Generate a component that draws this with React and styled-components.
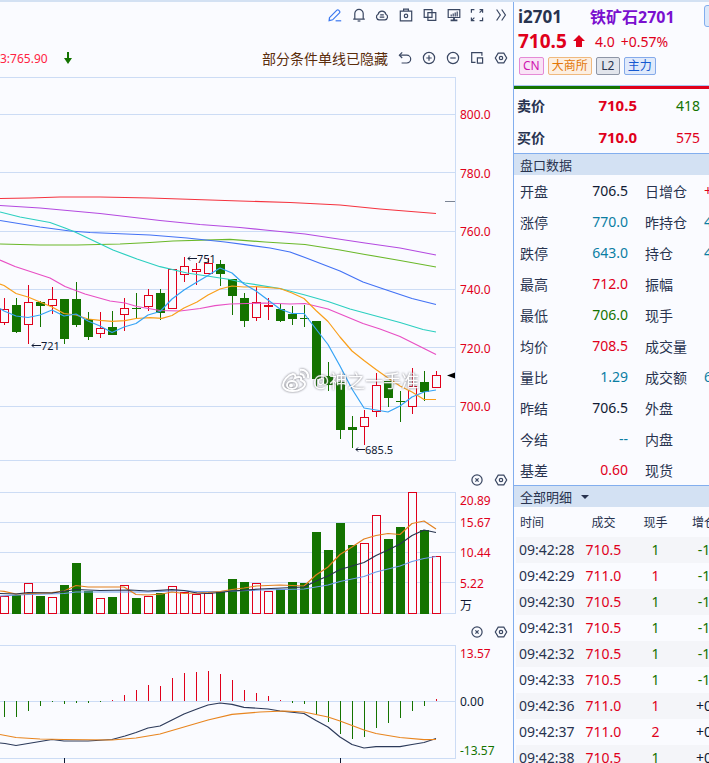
import styled, { createGlobalStyle, css } from 'styled-components';

const colors = {
    page: '#fafbff',
    band: '#d3e1f3',
    line: '#ccdcf5',
    edge: '#82aeee',
    ink: '#28334f',
    black: '#101a33',
    up: '#e0001b',
    down: '#147300',
    teal: '#0b7ea3',
};

const GlobalStyle = createGlobalStyle`
    * {
        box-sizing: border-box;
    }
    body {
        margin: 0;
        background-color: ${colors.page};
        color: ${colors.ink};
        font-family: 'Noto Sans', 'Noto Sans CJK SC', sans-serif;
        font-size: 14px;
    }
    button,
    select {
        font: inherit;
        color: inherit;
        padding: 0;
        border: none;
        background: none;
        cursor: pointer;
    }
`;

const Container = styled.div`
    display: flex;
    height: 100vh;
    overflow: hidden;
    border-top: 2px solid ${colors.band};
`;
const ChartPane = styled.main`
    flex: 1;
    min-width: 0;
    display: flex;
    flex-direction: column;
    overflow: hidden;
`;
const Toolbar = styled.div`
    height: 26px;
    display: flex;
    justify-content: flex-end;
    padding-right: 5px;
`;
const ToolGroup = styled.div`
    width: 180px;
    display: flex;
    align-items: center;
    justify-content: space-between;
`;
const StatusRow = styled.div`
    height: 36px;
    margin-top: 12px;
    padding-right: 5px;
    display: flex;
    align-items: center;
    gap: 10px;
`;
const MaValue = styled.span`
    font-size: 12px;
    color: #ff2343;
`;
const Notice = styled.span`
    margin-left: auto;
    color: #5a2d0c;
    white-space: nowrap;
`;
const IconButton = styled.button`
    display: flex;
    flex: none;
    color: ${(props) => (props.$active ? '#3b78f0' : '#3a4762')};
`;
const Glyph = styled.svg`
    display: block;
    flex: none;
`;
const PanelHeader = styled.div`
    height: 24px;
    padding-right: 5px;
    display: flex;
    flex: none;
    align-items: center;
    justify-content: flex-end;
    gap: 10px;
`;
const ChartRow = styled.div`
    display: flex;
    flex: none;
    justify-content: flex-end;
`;
// the plots stay glued to the price axis, grid lines run on to the left
const Plot = styled.svg`
    display: block;
    flex: none;
    overflow: visible;
`;
const AxisText = styled.text`
    font-size: 12px;
    fill: ${(props) => props.$color || colors.up};
`;
const MarkText = styled.text`
    font-size: 11px;
    fill: ${colors.black};
`;
const WatermarkGroup = styled.g`
    opacity: 0.9;
    filter: drop-shadow(0 0 1px rgba(80, 80, 90, 0.9));
`;
const Watermark = styled.text`
    font-size: 18px;
    fill: #ffffff;
`;

const QuotePane = styled.aside`
    flex: none;
    width: 196px;
    overflow: hidden;
    border-left: 1px solid ${colors.edge};
`;
const QuoteInner = styled.div`
    width: 252px;
`;
const QuoteHead = styled.header`
    height: 84px;
    padding: 2px 0 0 4px;
    border-bottom: 1px solid #a9c6f2;
`;
const NameRow = styled.div`
    height: 24px;
    display: flex;
    align-items: center;
    font-size: 16px;
    font-weight: 700;
`;
const Code = styled.span`
    width: 72px;
    font-size: 17px;
`;
const Name = styled.span`
    width: 114px;
    color: #7a10cf;
`;
const NameButton = styled.button`
    width: 48px;
    height: 22px;
    border: 1px solid ${colors.edge};
    border-radius: 3px;
    background-color: #dce8fa;
`;
const PriceRow = styled.div`
    height: 26px;
    display: flex;
    align-items: center;
    color: ${colors.up};
`;
const LastPrice = styled.strong`
    width: 55px;
    font-size: 19px;
`;
const Change = styled.span`
    margin-left: ${(props) => props.$gap}px;
`;
const Badges = styled.div`
    height: 24px;
    padding-left: 1px;
    display: flex;
    align-items: center;
    gap: 4px;
`;
const Badge = styled.span`
    min-width: 24px;
    height: 18px;
    padding: 0 3px;
    font-size: 12px;
    line-height: 16px;
    text-align: center;
    color: ${(props) => props.$color};
    border: 1px solid ${(props) => props.$border};
    border-radius: 2px;
    background-color: ${(props) => props.$fill};
`;
const RatioBar = styled.div`
    height: 3px;
    display: flex;
`;
const RatioPart = styled.div`
    flex: ${(props) => props.$share};
    background-color: ${(props) => props.$color};
`;
const OrderRow = styled.div`
    height: 32px;
    display: grid;
    grid-template-columns: 60px 60px 63px;
    align-items: center;
    padding-left: 3px;
`;
const OrderLabel = styled.span`
    font-weight: 700;
`;
const OrderPrice = styled.strong`
    font-size: 15px;
    text-align: right;
    color: ${colors.up};
`;
const OrderSize = styled.span`
    text-align: right;
    color: ${(props) => props.$color};
`;
const SectionHeader = styled.div`
    height: 22px;
    padding-left: 6px;
    display: flex;
    align-items: center;
    gap: 8px;
    font-size: 13px;
    border-top: 1px solid ${colors.edge};
    background-color: ${colors.band};
`;
const SectionSelect = styled.select`
    appearance: none;
    outline: none;
`;
const QuoteGrid = styled.dl`
    margin: 0;
    padding-left: 6px;
    display: grid;
    grid-template-columns: 42px 66px 42px 60px;
    grid-auto-rows: 31px;
    align-items: center;
`;
const QuoteLabel = styled.dt`
    white-space: nowrap;
    ${(props) =>
        props.$second &&
        css`
            padding-left: 17px;
        `}
`;
const QuoteValue = styled.dd`
    margin: 0;
    text-align: ${(props) => (props.$second ? 'left' : 'right')};
    padding-left: ${(props) => (props.$second ? 34 : 0)}px;
    color: ${(props) => props.$color};
`;
const TickTable = styled.table`
    width: 210px;
    margin-left: 2px;
    table-layout: fixed;
    border-collapse: collapse;
`;
const TickHead = styled.th`
    width: ${(props) => props.$width}px;
    height: 30px;
    padding: 0 0 0 ${(props) => (props.$left ? 4 : 0)}px;
    font-size: 12px;
    font-weight: 400;
    text-align: ${(props) => (props.$left ? 'left' : 'center')};
`;
const TickRow = styled.tr`
    height: 26px;
    &:nth-child(odd) {
        background-color: #f4f5f9;
    }
`;
const TickCell = styled.td`
    padding: 0 0 0 ${(props) => (props.$left ? 3 : 0)}px;
    line-height: 26px;
    text-align: ${(props) => (props.$left ? 'left' : 'center')};
    color: ${(props) => props.$color || colors.ink};
`;

const icons = {
    edit: (
        <>
            <path d='M1.5 9.6 8.9 2.2a1.2 1.2 0 0 1 1.7 0l.9.9a1.2 1.2 0 0 1 0 1.7L4.6 11.8l-3.5.9z' />
            <path d='M7.6 12.8h5.6' />
        </>
    ),
    bell: (
        <>
            <path d='M1.2 11.1h11.6M2.8 11V5.6a4.2 4.2 0 0 1 8.4 0V11' />
            <path d='M5.6 13h2.8' />
        </>
    ),
    cloud: (
        <>
            <path d='M4 11.8a2.9 2.9 0 0 1-.9-5.5 4 4 0 0 1 7.8 0 2.9 2.9 0 0 1-.9 5.5z' />
            <path d='M5.2 6.9h3.6M4.7 9.2h4.6' />
        </>
    ),
    camera: (
        <>
            <path d='M1.3 3.2h11.4v9.6H1.3zM4.6 3V1.2h4.8V3' />
            <circle cx='7' cy='7.9' r='1.7' />
        </>
    ),
    copy: <path d='M1.2 1.6h7.8v7.8H1.2zM4.9 4.6h7.9v7.8H4.9z' />,
    monitor: (
        <>
            <path d='M1.2 1.6h11.6v7.9H1.2z' />
            <path d='M4.2 8.4V6.6M6.2 8.4V5.4M8.2 8.4V4.4M10.2 8.4V3.6' />
            <path d='M3.6 12.4h6.8M7 10v2' strokeWidth='1.8' />
        </>
    ),
    expand: (
        <>
            <path d='M1.4 4.8V1.6h3M9.6 1.6h3v3.2M12.6 9.4v3.2h-3M4.4 12.6h-3V9.4' />
            <path d='M12.4 1.8 9.6 4.6M1.6 12.4l2.8-2.8' />
        </>
    ),
    more: <path d='M2.6 1.5 6.3 7l-3.7 5.5M7.7 1.5 11.4 7l-3.7 5.5' />,
    undo: (
        <>
            <path d='M1.6 4.2h7.2a3.9 3.9 0 0 1 0 7.8H3.6' />
            <path d='M4.2 1.4 1.4 4.2 4.2 7' />
        </>
    ),
    plus: (
        <>
            <circle cx='7' cy='7' r='5.6' />
            <path d='M7 4.3v5.4M4.3 7h5.4' />
        </>
    ),
    minus: (
        <>
            <circle cx='7' cy='7' r='5.6' />
            <path d='M4.3 7h5.4' />
        </>
    ),
    close: (
        <>
            <circle cx='7' cy='7' r='5.1' />
            <path d='m5.4 5.4 3.2 3.2M8.6 5.4 5.4 8.6' />
        </>
    ),
    popout: (
        <>
            <path d='M11.9 4.8V1.7H1.7v9.7h3.8' />
            <path d='M7.4 6.9h5.2v5.3H7.4z' />
        </>
    ),
    settings: (
        <>
            <path d='M4.2 2.1h5.6L12.7 7l-2.9 4.9H4.2L1.3 7z' />
            <circle cx='7' cy='7' r='1.7' />
        </>
    ),
};

const tools = [
    ['edit', '画线'],
    ['bell', '预警'],
    ['cloud', '云端'],
    ['camera', '截图'],
    ['copy', '叠加'],
    ['monitor', '看盘'],
    ['expand', '全屏'],
    ['more', '更多'],
];
const chartTools = [
    ['undo', '撤销'],
    ['plus', '放大'],
    ['minus', '缩小'],
    ['popout', '弹出'],
    ['settings', '设置'],
];
const panelTools = [
    ['close', '关闭'],
    ['settings', '设置'],
];

// up?, body top, body bottom, high, low, volume top, macd end
const bars = [
    [1, 309, 323, 298, 325, 596, 717],
    [0, 305, 332, 298, 333, 595, 717],
    [1, 302, 325, 285, 344, 583, 711],
    [0, 302, 306, 301, 327, 596, 706],
    [1, 299, 306, 287, 314, 597, 702],
    [0, 299, 339, 299, 344, 585, 704],
    [0, 299, 325, 282, 327, 563, 703],
    [0, 319, 337, 312, 340, 591, 703],
    [1, 328, 334, 312, 338, 598, 702],
    [0, 327, 335, 311, 335, 597, 700],
    [1, 308, 315, 298, 331, 585, 695],
    [0, 308, 309, 293, 318, 598, 690],
    [1, 295, 307, 289, 311, 596, 685],
    [0, 293, 313, 289, 320, 593, 686],
    [1, 269, 309, 269, 309, 586, 678],
    [1, 266, 275, 257, 282, 592, 673],
    [1, 269, 272, 263, 285, 594, 672],
    [1, 263, 274, 258, 274, 593, 671],
    [0, 264, 274, 260, 286, 592, 674],
    [0, 279, 296, 279, 315, 579, 680],
    [0, 298, 321, 293, 327, 582, 690],
    [1, 302, 318, 287, 321, 583, 693],
    [1, 305, 307, 298, 320, 591, 696],
    [0, 309, 321, 304, 322, 589, 700],
    [0, 314, 319, 306, 325, 582, 703],
    [0, 318, 319, 305, 327, 583, 704],
    [0, 321, 379, 321, 387, 532, 715],
    [0, 376, 385, 362, 391, 550, 722],
    [0, 382, 430, 379, 439, 523, 734],
    [0, 427, 430, 416, 448, 545, 739],
    [1, 417, 427, 410, 445, 543, 737],
    [1, 385, 412, 373, 417, 515, 728],
    [0, 381, 398, 381, 407, 539, 723],
    [0, 401, 402, 391, 422, 527, 718],
    [1, 386, 407, 368, 414, 492, 711],
    [0, 382, 392, 371, 401, 530, 706],
    [1, 375, 388, 371, 388, 556, 699],
];

const averages = [
    ['#f5333f', '0,198.5 30,198 60,197 100,197 150,198 180,199 240,201 290,202.5 340,205 380,209 436,213.5'],
    ['#b44ae0', '0,205.5 40,208 100,213.5 160,220.5 200,224.5 240,227.5 265,230 305,234 365,243 400,248 436,255'],
    ['#6bb82a', '0,244 40,245 77,245 120,244 150,242.5 173,241 230,239.3 265,242 305,244.5 340,250 365,254.5 400,260.5 436,267'],
    ['#4372f5', '0,220.5 40,227 70,231 90,232.5 150,235 187,238 225,242 245,244.7 270,248 290,252 305,257.5 340,271 363,282 388,290.5 412,298.5 436,304.5'],
    ['#2ccfc0', '0,212 20,217 50,222.5 65,228 75,232 93,240.5 113,250 137,259 160,266.7 187,273 207,276 230,279.5 245,283 280,288.5 305,295 328,301.5 350,309 400,322.5 423,329.5 436,332'],
    ['#e84fc4', '0,260 15,266.5 50,278 65,286.5 85,294 110,301 125,303 137,306.5 160,310.5 180,311 200,308.5 215,305.7 230,304 265,303 290,304 305,303.5 328,309 363,323.5 380,329 400,336.5 425,349 436,354.5'],
    ['#f99f1b', '0,284 4,285.5 16,293.5 28,297 40,302 52,307 64,313.5 76,315 88,319 100,320.3 112,321.3 125,320.7 136,318.5 150,317.7 162,318.3 172,315.5 184,308 197,302 208,295 220,289 232,286 244,287 256,286.7 280,288.5 292,293 304,298.5 316,310.5 328,321.5 340,337 352,351 364,360.5 376,369.5 388,378 400,386 412,392 424,399.5 436,399.5'],
    ['#35a3f5', '0,308.5 4,311 16,316 28,317.5 40,315 52,310 64,316 76,314 88,321 100,326 112,332.5 124,327 136,323.5 148,315 160,311.5 172,299 184,290 197,282 208,275.5 220,268 232,273 244,284 256,291 268,300 280,309 292,313.5 304,313.5 316,329 328,344.5 340,366 352,389 364,408 376,410 388,412 400,406 412,397 424,392 436,390'],
];
const volumeLines = [
    ['#6d9be8', '0,596 28,594.5 64,593.5 76,592 148,592 184,590.5 197,591.5 220,591.5 260,590 304,589 328,585 340,581.5 364,576.5 376,572 400,566 412,561.5 424,558.5 436,556.5'],
    ['#e2801f', '0,591 4,591.3 16,594 52,592.7 64,591 76,585.5 88,587 124,587 136,594.5 148,595 162,594 172,592 184,593.5 208,592.5 220,591.5 232,589.5 244,588 256,586 280,585 304,586 316,575 328,567 340,554.5 352,547 364,539 376,535.5 388,533.5 400,534.5 412,523.5 424,521 436,529'],
    ['#26334d', '0,593.5 16,594 28,592.5 52,593 76,589.5 100,590.5 130,590 148,591 172,589.7 184,590.5 197,593 208,593.5 220,592.5 232,591 260,589 304,587 316,581 328,576 340,569.5 352,566 364,562.5 376,555.5 388,550 400,544 412,535.5 424,530 436,532.5'],
];
const macdLines = [
    ['#2c3a5a', '0,743 5,743.5 16,745.5 28,743.5 40,741.5 52,739.5 64,741 88,741 112,739.5 125,736 136,732.5 148,728 160,726 172,720 184,714 197,709 208,705 220,703 232,704.3 244,707.3 268,709 280,711 304,713.5 316,720.5 328,727 340,737 352,744.5 364,748 376,746.7 400,746.7 412,744.5 424,742.5 436,738.5'],
    ['#e8851f', '0,734.5 16,737.5 40,739 64,739.5 112,740 136,738 160,734 184,727 208,720 232,714.3 260,712 285,711 304,712 328,717 340,721 352,725.5 364,730 376,733.5 400,737.5 424,739.7 436,739.5'],
];

const priceAxis = [
    ['800.0', 114],
    ['780.0', 173],
    ['760.0', 231],
    ['740.0', 289],
    ['720.0', 348],
    ['700.0', 406],
];
const volumeAxis = [
    ['20.89', 500],
    ['15.67', 522],
    ['10.44', 552],
    ['5.22', 583],
    ['万', 605, colors.black],
];
const macdAxis = [
    ['13.57', 653],
    ['0.00', 701, colors.black],
    ['-13.57', 750, colors.down],
];
const marks = [
    ['751', 187, 258],
    ['721', 31, 345],
    ['685.5', 355, 449],
];

const quotes = [
    ['开盘', '706.5', colors.black, '日增仓', '+', colors.up],
    ['涨停', '770.0', colors.teal, '昨持仓', '4', colors.teal],
    ['跌停', '643.0', colors.teal, '持仓', '4', colors.teal],
    ['最高', '712.0', colors.up, '振幅', ''],
    ['最低', '706.0', colors.down, '现手', ''],
    ['均价', '708.5', colors.up, '成交量', ''],
    ['量比', '1.29', colors.teal, '成交额', '6', colors.teal],
    ['昨结', '706.5', colors.black, '外盘', ''],
    ['今结', '--', colors.teal, '内盘', ''],
    ['基差', '0.60', colors.up, '现货', ''],
];

const ticks = [
    ['09:42:28', '710.5', '1', colors.down, '-1'],
    ['09:42:29', '711.0', '1', colors.up, '-1'],
    ['09:42:30', '710.5', '1', colors.down, '-1'],
    ['09:42:31', '710.5', '1', colors.down, '-1'],
    ['09:42:32', '710.5', '1', colors.down, '-1'],
    ['09:42:33', '710.5', '1', colors.down, '-1'],
    ['09:42:36', '711.0', '1', colors.up, '+0'],
    ['09:42:37', '711.0', '2', colors.up, '+0'],
    ['09:42:38', '710.5', '1', colors.down, '+0'],
];

const Tools = ({ items, active }) =>
    items.map(([name, label]) => (
        <IconButton key={name} type='button' aria-label={label} $active={name === active}>
            <Glyph width='14' height='14' viewBox='0 0 14 14' fill='none' stroke='currentColor' strokeWidth='1.2'>
                {icons[name]}
            </Glyph>
        </IconButton>
    ));

const Grid = ({ lines, top, bottom }) => (
    <g fill={colors.line}>
        {lines.map((y) => (
            <rect key={y} x='-3000' y={y} width='3456' height='1' />
        ))}
        <rect x='455' y={top} width='1' height={bottom - top} />
    </g>
);

const Axis = ({ labels }) =>
    labels.map(([label, y, color]) => (
        <AxisText key={label} x='460' y={y + 5} $color={color}>
            {label}
        </AxisText>
    ));

const Lines = ({ lines }) =>
    lines.map(([color, points]) => (
        <polyline key={color} points={points} fill='none' stroke={color} strokeWidth='1.2' strokeLinejoin='round' />
    ));

const Body = ({ up, x, top, bottom }) =>
    up ? (
        <rect x={x + 0.5} y={top + 0.5} width='8' height={bottom - top - 1} fill={colors.page} stroke={colors.up} />
    ) : (
        <rect x={x} y={top} width='9' height={bottom - top} fill={colors.down} />
    );

const PriceChart = () => (
    <Plot width='513' height='392' viewBox='0 76 513 392'>
        <Grid lines={[77, 114, 172, 231, 289, 347, 406, 460]} top={77} bottom={461} />
        {bars.map(([up, top, bottom, high, low], i) => (
            <g key={i}>
                <rect x={i * 12 + 4} y={high} width='1' height={low - high} fill={up ? colors.up : colors.down} />
                <Body up={up} x={i * 12} top={top} bottom={bottom} />
            </g>
        ))}
        <Lines lines={averages} />
        {marks.map(([label, x, y]) => (
            <g key={label}>
                <path d={`M${x + 10} ${y + 0.5}H${x + 1}M${x + 3} ${y - 1.5}l-2 2 2 2`} fill='none' stroke={colors.black} />
                <MarkText x={x + 10} y={y + 5}>
                    {label}
                </MarkText>
            </g>
        ))}
        <rect x='445' y='201' width='10' height='1' fill='#7b8494' />
        <path d='M455 372.5v6l-8-3z' fill='#000' />
        <WatermarkGroup>
            <g fill='none' stroke='#fff' strokeWidth='2'>
                <path d='M293 374c-5 1-10 7-10 11 0 4 5 6 10 6 7 0 12-4 12-7 0-2-2-3-4-4 1-3-2-4-6-2 1-2 0-4-2-4z' />
                <ellipse cx='292' cy='385' rx='5' ry='4' />
                <circle cx='291' cy='385.5' r='1' />
                <path d='M300 370c5-1 9 3 8 8M300 374c3 0 4 1 4 4' />
            </g>
            <Watermark x='313' y='388'>
                @神之一手准
            </Watermark>
        </WatermarkGroup>
        <Axis labels={priceAxis} />
    </Plot>
);

const VolumeChart = () => (
    <Plot width='513' height='128' viewBox='0 492 513 128'>
        <Grid lines={[492, 522, 552, 582, 613]} top={492} bottom={613} />
        {bars.map(([up, , , , , volume], i) => (
            <Body key={i} up={up} x={i * 12} top={volume} bottom={614} />
        ))}
        <Lines lines={volumeLines} />
        <Axis labels={volumeAxis} />
    </Plot>
);

const MacdChart = () => (
    <Plot width='513' height='119' viewBox='0 644 513 119'>
        <Grid lines={[645, 701, 758]} top={645} bottom={758} />
        {bars.map((bar, i) => {
            const end = bar[6];
            return (
                <rect
                    key={i}
                    x={i * 12 + 4}
                    y={Math.min(end, 701)}
                    width='1'
                    height={Math.max(Math.abs(end - 701), 1)}
                    fill={end < 701 ? colors.up : colors.down}
                />
            );
        })}
        <Lines lines={macdLines} />
        <path d='M64.5 758v5M340.5 758v5' stroke={colors.black} />
        <Axis labels={macdAxis} />
    </Plot>
);

const Quotes = () => (
    <QuotePane>
        <QuoteInner>
            <QuoteHead>
                <NameRow>
                    <Code>i2701</Code>
                    <Name>铁矿石2701</Name>
                    <NameButton type='button' aria-label='切换合约' />
                </NameRow>
                <PriceRow>
                    <LastPrice>710.5</LastPrice>
                    <Glyph width='12' height='12' viewBox='0 0 12 12' fill='currentColor'>
                        <path d='M6 0l6 6H9v6H3V6H0z' />
                    </Glyph>
                    <Change $gap={10}>4.0</Change>
                    <Change $gap={6}>+0.57%</Change>
                </PriceRow>
                <Badges>
                    <Badge $color='#cf13b0' $border='#e58ad6' $fill='#f9e3f6'>CN</Badge>
                    <Badge $color='#e37708' $border='#efb97f' $fill='#fcefe2'>大商所</Badge>
                    <Badge $color='#28334f' $border='#8d95a6' $fill='#e2e5ec'>L2</Badge>
                    <Badge $color='#1458d0' $border='#85aaea' $fill='#e0eafb'>主力</Badge>
                </Badges>
            </QuoteHead>
            <RatioBar>
                <RatioPart $share={418} $color={colors.down} />
                <RatioPart $share={575} $color={colors.up} />
            </RatioBar>
            <OrderRow>
                <OrderLabel>卖价</OrderLabel>
                <OrderPrice>710.5</OrderPrice>
                <OrderSize $color={colors.down}>418</OrderSize>
            </OrderRow>
            <OrderRow>
                <OrderLabel>买价</OrderLabel>
                <OrderPrice>710.0</OrderPrice>
                <OrderSize $color={colors.up}>575</OrderSize>
            </OrderRow>
            <SectionHeader>盘口数据</SectionHeader>
            <QuoteGrid>
                {quotes.map(([label, value, color, label2, value2, color2]) => [
                    <QuoteLabel key={label}>{label}</QuoteLabel>,
                    <QuoteValue key={`${label}-value`} $color={color}>{value}</QuoteValue>,
                    <QuoteLabel key={label2} $second>{label2}</QuoteLabel>,
                    <QuoteValue key={`${label2}-value`} $second $color={color2}>{value2}</QuoteValue>,
                ])}
            </QuoteGrid>
            <SectionHeader>
                <SectionSelect aria-label='明细类型'>
                    <option>全部明细</option>
                </SectionSelect>
                <Glyph width='8' height='4' viewBox='0 0 8 4' fill={colors.ink}>
                    <path d='M0 0h8L4 4z' />
                </Glyph>
            </SectionHeader>
            <TickTable>
                <thead>
                    <tr>
                        <TickHead $width={62} $left>时间</TickHead>
                        <TickHead $width={51}>成交</TickHead>
                        <TickHead $width={53}>现手</TickHead>
                        <TickHead $width={44}>增仓</TickHead>
                    </tr>
                </thead>
                <tbody>
                    {ticks.map(([time, price, lots, color, change]) => (
                        <TickRow key={time}>
                            <TickCell $left>{time}</TickCell>
                            <TickCell $color={colors.up}>{price}</TickCell>
                            <TickCell $color={color}>{lots}</TickCell>
                            <TickCell $color={change === '+0' ? colors.black : colors.down}>{change}</TickCell>
                        </TickRow>
                    ))}
                </tbody>
            </TickTable>
        </QuoteInner>
    </QuotePane>
);

const App = () => {
    return (
        <>
            <GlobalStyle />
            <Container>
                <ChartPane>
                    <Toolbar>
                        <ToolGroup>
                            <Tools items={tools} active='edit' />
                        </ToolGroup>
                    </Toolbar>
                    <StatusRow>
                        <MaValue>3:765.90</MaValue>
                        <Glyph width='22' height='12' viewBox='0 0 22 12' fill={colors.down}>
                            <path d='M9 0h2v6h3l-4 6-4-6h3z' />
                        </Glyph>
                        <Notice>部分条件单线已隐藏</Notice>
                        <Tools items={chartTools} />
                    </StatusRow>
                    <ChartRow>
                        <PriceChart />
                    </ChartRow>
                    <PanelHeader>
                        <Tools items={panelTools} />
                    </PanelHeader>
                    <ChartRow>
                        <VolumeChart />
                    </ChartRow>
                    <PanelHeader>
                        <Tools items={panelTools} />
                    </PanelHeader>
                    <ChartRow>
                        <MacdChart />
                    </ChartRow>
                </ChartPane>
                <Quotes />
            </Container>
        </>
    );
};

export default App;
